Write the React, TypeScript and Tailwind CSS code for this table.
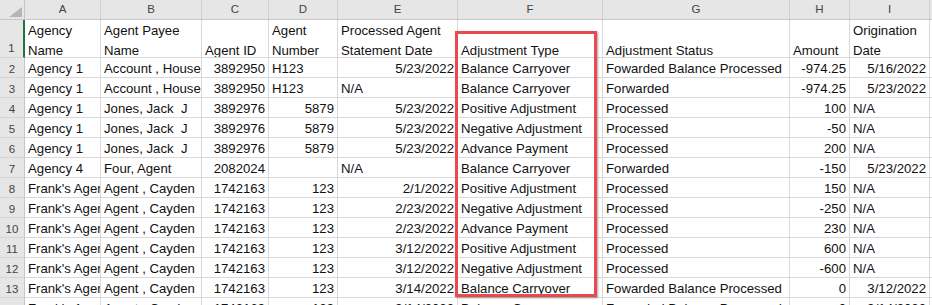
import React from 'react';

const cols = ['A', 'B', 'C', 'D', 'E', 'F', 'G', 'H', 'I'];

const gridCols = 'grid grid-cols-[25px_76px_101px_67px_69px_120px_145px_187px_60px_80px_1fr]';

const titles: string[][] = [
    ['Agency', 'Name'],
    ['Agent Payee', 'Name'],
    ['', 'Agent ID'],
    ['Agent', 'Number'],
    ['Processed Agent', 'Statement Date'],
    ['', 'Adjustment Type'],
    ['', 'Adjustment Status'],
    ['', 'Amount'],
    ['Origination', 'Date'],
];

const rows: string[][] = [
    ['Agency 1', 'Account , Household', '3892950', 'H123', '5/23/2022', 'Balance Carryover', 'Fowarded Balance Processed', '-974.25', '5/16/2022'],
    ['Agency 1', 'Account , Household', '3892950', 'H123', 'N/A', 'Balance Carryover', 'Forwarded', '-974.25', '5/23/2022'],
    ['Agency 1', 'Jones, Jack  J', '3892976', '5879', '5/23/2022', 'Positive Adjustment', 'Processed', '100', 'N/A'],
    ['Agency 1', 'Jones, Jack  J', '3892976', '5879', '5/23/2022', 'Negative Adjustment', 'Processed', '-50', 'N/A'],
    ['Agency 1', 'Jones, Jack  J', '3892976', '5879', '5/23/2022', 'Advance Payment', 'Processed', '200', 'N/A'],
    ['Agency 4', 'Four, Agent', '2082024', '', 'N/A', 'Balance Carryover', 'Forwarded', '-150', '5/23/2022'],
    ["Frank's Agency", 'Agent , Cayden', '1742163', '123', '2/1/2022', 'Positive Adjustment', 'Processed', '150', 'N/A'],
    ["Frank's Agency", 'Agent , Cayden', '1742163', '123', '2/23/2022', 'Negative Adjustment', 'Processed', '-250', 'N/A'],
    ["Frank's Agency", 'Agent , Cayden', '1742163', '123', '2/23/2022', 'Advance Payment', 'Processed', '230', 'N/A'],
    ["Frank's Agency", 'Agent , Cayden', '1742163', '123', '3/12/2022', 'Positive Adjustment', 'Processed', '600', 'N/A'],
    ["Frank's Agency", 'Agent , Cayden', '1742163', '123', '3/12/2022', 'Negative Adjustment', 'Processed', '-600', 'N/A'],
    ["Frank's Agency", 'Agent , Cayden', '1742163', '123', '3/14/2022', 'Balance Carryover', 'Fowarded Balance Processed', '0', '3/12/2022'],
    ["Frank's Agency", 'Agent , Cayden', '1742163', '123', '3/14/2022', 'Balance Carryover', 'Fowarded Balance Processed', '0', '3/14/2022'],
];

const isNumber = (v: string) => /^-?[\d./]+$/.test(v);

const App: React.FC = () => {
    return (
        <div className="relative w-[932px] h-[305px] overflow-hidden bg-white text-[#111] font-['Liberation_Sans',Arial,sans-serif]">
            {/* column letters */}
            <div className={`${gridCols} h-[20px] bg-[#e6e6e6] border-b border-[#c6c6c6] text-[11.5px] text-[#444]`}>
                <div className="relative border-r border-[#c6c6c6]">
                    <svg className="absolute left-[9px] top-[7px]" width="13" height="10" viewBox="0 0 13 10">
                        <polygon points="13,0 13,10 0,10" fill="#b5b5b5" />
                    </svg>
                </div>
                {cols.map((c) => (
                    <div key={c} className="flex items-center justify-center border-r border-[#d0d0d0]">
                        {c}
                    </div>
                ))}
                <div />
            </div>

            {/* header row */}
            <div className={`${gridCols} h-[38px]`}>
                <div className="flex items-end justify-center pb-[1px] leading-[16px] bg-[#e6e6e6] border-r-2 border-r-[#217346] border-b border-b-[#d4d4d4] text-[11.5px] text-[#444]">
                    1
                </div>
                {titles.map((t, i) => (
                    <div key={i} className="overflow-hidden whitespace-nowrap px-[3px] pt-[1px] text-[13.2px] leading-[20px] border-r border-b border-[#d9d9d9]">
                        <div className="h-[20px]">{t[0]}</div>
                        <div className="h-[20px]">{t[1]}</div>
                    </div>
                ))}
                <div className="border-b border-[#d9d9d9]" />
            </div>

            {rows.map((r, ri) => (
                <div key={ri} className={`${gridCols} h-[20px]`}>
                    <div className="flex items-end justify-center leading-[16px] bg-[#e6e6e6] border-r border-[#c6c6c6] border-b border-b-[#d4d4d4] text-[11.5px] text-[#444]">
                        {ri + 2}
                    </div>
                    {r.map((v, ci) => (
                        <div
                            key={ci}
                            className={`flex items-end overflow-hidden whitespace-pre px-[3px] text-[13.2px] leading-[16px] border-r border-b border-[#d9d9d9] ${
                                isNumber(v) ? 'justify-end' : 'justify-start'
                            }`}
                        >
                            {v}
                        </div>
                    ))}
                    <div className="border-b border-[#d9d9d9]" />
                </div>
            ))}

            {/* highlight box */}
            <div className="absolute left-[455px] top-[31px] w-[142px] h-[266px] border-[3px] border-[#e84a4f] shadow-[1px_1px_2px_rgba(0,0,0,0.35)]" />
        </div>
    );
};

export default App;
